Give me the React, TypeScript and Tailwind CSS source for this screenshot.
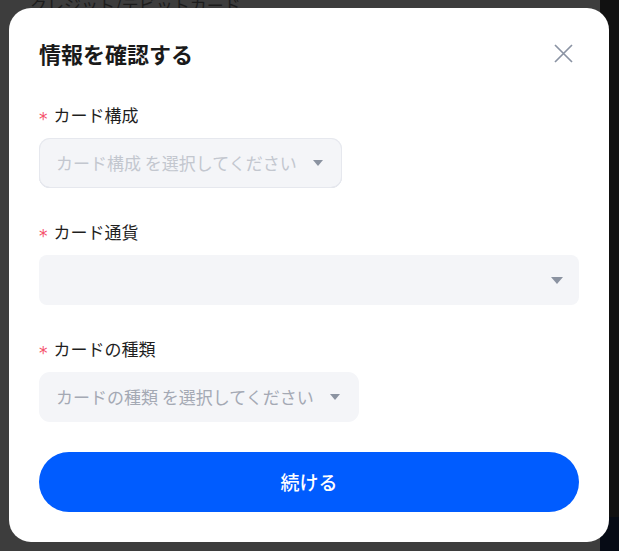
import { ReactNode } from "react";

const FONT = "font-['Noto_Sans_CJK_JP','Noto_Sans',sans-serif]";

function Caret({ className = "" }: { className?: string }) {
  return (
    <svg width="10" height="6" viewBox="0 0 10 6" className={className}>
      <path d="M0 0H10L5 6Z" fill="currentColor" />
    </svg>
  );
}

function Field({ label, children }: { label: string; children: ReactNode }) {
  return (
    <div className="flex flex-col">
      <label className="flex h-6 items-center text-[17px] leading-6 text-[#1f1f1f]">
        <span className="relative top-[4px] mr-[6px] font-['DejaVu_Sans',sans-serif] text-[17px] leading-none text-[#f5506a]">*</span>
        {label}
      </label>
      <div className="mt-[11px]">{children}</div>
    </div>
  );
}

export default function App() {
  return (
    <div className={`relative h-[551px] w-[619px] overflow-hidden bg-[#3d3d3d] ${FONT}`}>
      {/* page behind the overlay */}
      <div className="flex h-full">
        <div className="flex-1">
          <p className="-mt-[7px] pl-[30px] text-[17px] leading-6 text-[#1c1c1c]">クレジット/デビットカード</p>
        </div>
        <div className="flex w-[19px] flex-col">
          <div className="flex-1 bg-[#111111]" />
          <div className="h-[34px] bg-[#060b15]" />
        </div>
      </div>

      {/* Dialog */}
      <div className="absolute left-[9px] top-[8px] flex w-[600px] flex-col rounded-[22px] bg-white px-[30px] pb-[30px] pt-[30px]">
        <div className="flex h-[30px] items-center justify-between">
          <h3 className="text-[22px] font-bold leading-[30px] text-[#1a1a1a]">情報を確認する</h3>
          <button className="mr-[6px] text-[#8a93a3]">
            <svg width="19" height="19" viewBox="0 0 19 19">
              <path d="M1 1L18 18M18 1L1 18" stroke="currentColor" strokeWidth="1.7" />
            </svg>
          </button>
        </div>

        <div className="mt-[35px] flex flex-col gap-[32px]">
          <Field label="カード構成">
            <div className="inline-flex h-[50px] items-center rounded-[11px] bg-[#f4f5f8] pl-[17px] pr-[19px] shadow-[inset_0_0_0_1px_#e6e8ee,inset_0_-1px_0_#d6d9e2]">
              <span className="text-[17px] text-[#c3c7cf]">カード構成 を選択してください</span>
              <Caret className="ml-[16px] text-[#8b93a1]" />
            </div>
          </Field>

          <Field label="カード通貨">
            <div className="flex h-[50px] items-center justify-end rounded-[8px] bg-[#f4f5f8] pr-[16px]">
              <svg width="12" height="7" viewBox="0 0 12 7" className="text-[#8b93a1]">
                <path d="M0 0H12L6 7Z" fill="currentColor" />
              </svg>
            </div>
          </Field>

          <Field label="カードの種類">
            <div className="inline-flex h-[50px] items-center rounded-[11px] bg-[#f4f5f8] pl-[17px] pr-[19px]">
              <span className="text-[17px] text-[#a4a9b4]">カードの種類 を選択してください</span>
              <Caret className="ml-[16px] text-[#8b93a1]" />
            </div>
          </Field>
        </div>

        <button className="mt-[30px] flex h-[60px] w-full items-center justify-center rounded-full bg-[#005cff] text-[19px] font-medium text-white">
          続ける
        </button>
      </div>
    </div>
  );
}
